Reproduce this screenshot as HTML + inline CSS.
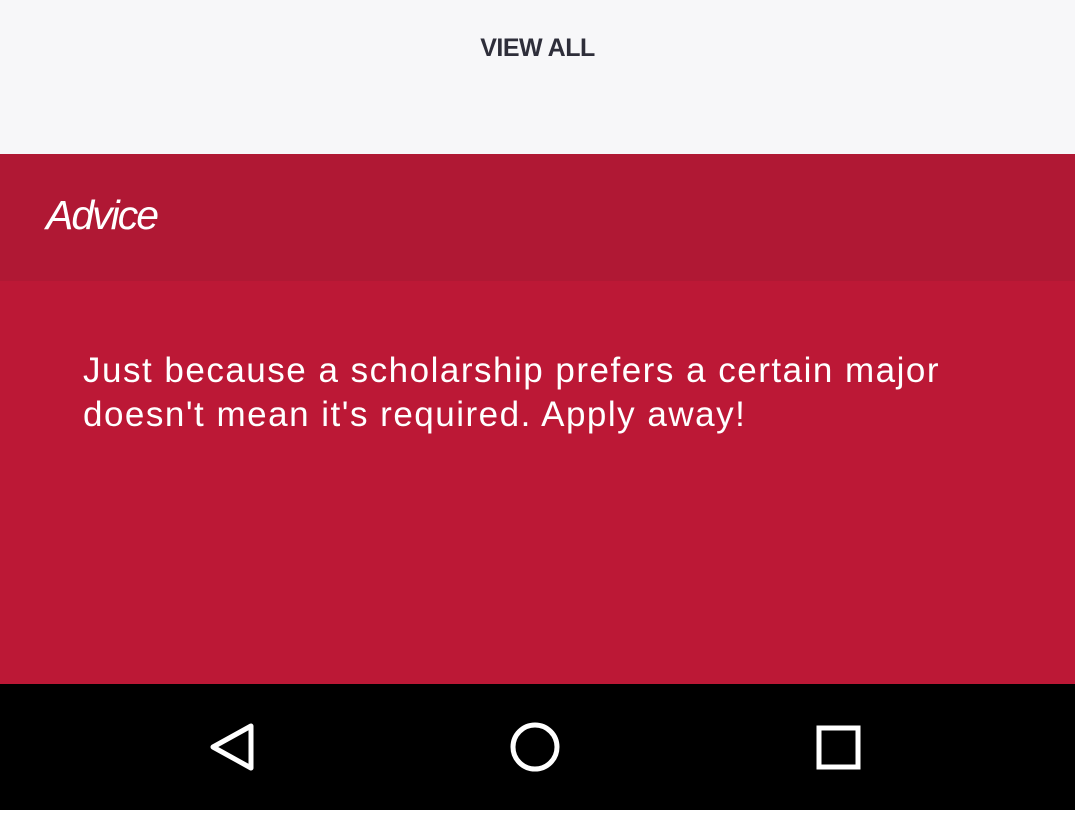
<!DOCTYPE html>
<html><head><style>
body{margin:0;width:1075px;height:810px;overflow:hidden;font-family:"Liberation Sans",sans-serif;}
.top{position:absolute;top:0;left:0;width:1075px;height:154px;background:#f7f7f9;}
.va{position:absolute;top:34px;left:0;width:1075px;text-align:center;font-weight:bold;font-size:25px;color:#2e2e3a;letter-spacing:-0.5px;}
.hd{position:absolute;top:154px;left:0;width:1075px;height:127px;background:#b01834;}
.hd span{position:absolute;left:46px;top:38px;font-size:41px;font-style:italic;color:#fff;letter-spacing:-2px;}
.bd{position:absolute;top:281px;left:0;width:1075px;height:403px;background:#bc1836;}
.bd p{position:absolute;left:83px;top:68px;margin:0;font-size:35px;line-height:44px;color:#fff;letter-spacing:1.5px;white-space:nowrap;}
.nav{position:absolute;top:684px;left:0;width:1075px;height:126px;background:#000;}
</style></head><body>
<div class="top"><div class="va">VIEW ALL</div></div>
<div class="hd"><span>Advice</span></div>
<div class="bd"><p>Just because a scholarship prefers a certain major<br>doesn't mean it's required. Apply away!</p></div>
<div class="nav"><svg width="1075" height="126">
<path d="M251 42 L213 63 L251 84 Z" fill="none" stroke="#fff" stroke-width="5" stroke-linejoin="round"/>
<circle cx="535" cy="63" r="22" fill="none" stroke="#fff" stroke-width="5"/>
<rect x="819" y="44" width="39" height="39" fill="none" stroke="#fff" stroke-width="5"/>
</svg></div>
</body></html>
